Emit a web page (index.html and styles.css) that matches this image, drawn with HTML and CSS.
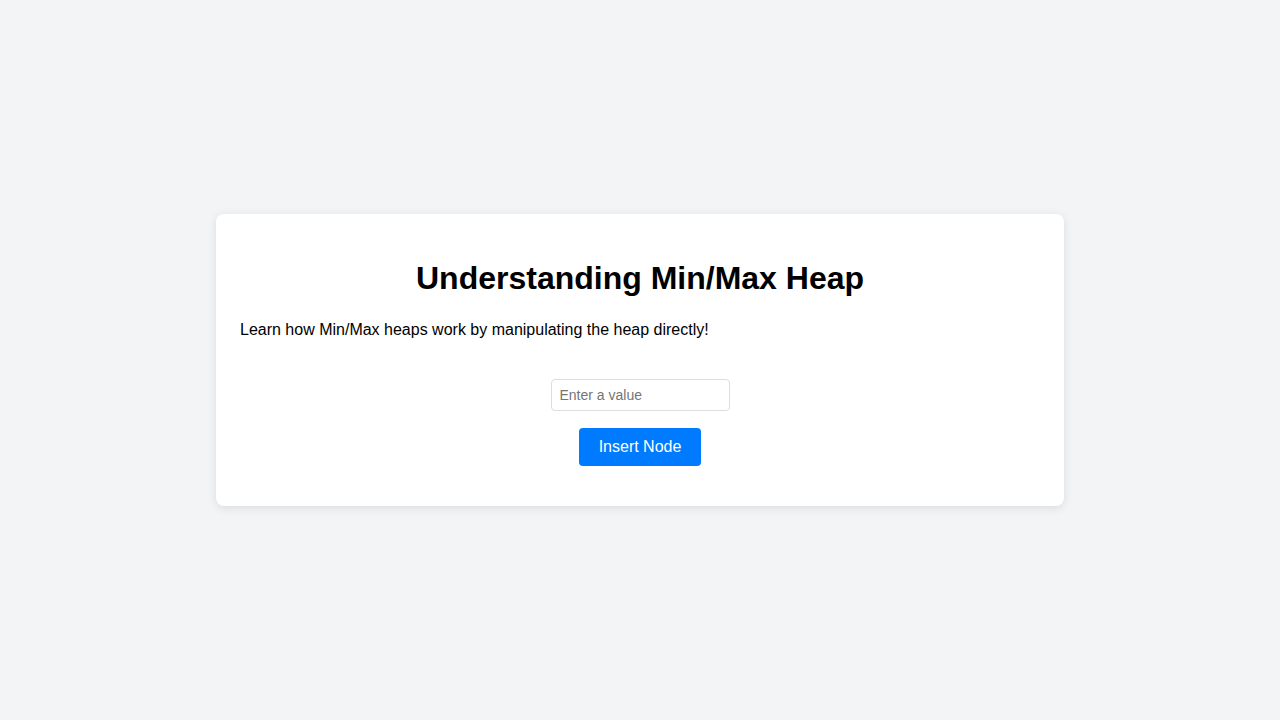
FILE: index.html
```html
<!DOCTYPE html>
<html lang="en">
<head>
<meta charset="utf-8">
<title>Min/Max Heap</title>
<link rel="stylesheet" href="styles.css">
</head>
<body>
<div class="page">
  <div class="card">
    <h1 class="title">Understanding Min/Max Heap</h1>
    <p class="intro">Learn how Min/Max heaps work by manipulating the heap directly!</p>
    <div class="controls">
      <input class="value-input" type="text" placeholder="Enter a value">
      <button class="insert-btn">Insert Node</button>
    </div>
  </div>
</div>
</body>
</html>
```
FILE: styles.css
```css
html, body {
  margin: 0;
  padding: 0;
}
body {
  background: #f3f4f6;
  font-family: "Liberation Sans", Arial, sans-serif;
  color: #000;
}
.page {
  min-height: 100vh;
  display: flex;
  align-items: center;
  justify-content: center;
}
.card {
  box-sizing: border-box;
  width: 848px;
  padding: 24px;
  background: #fff;
  border-radius: 8px;
  box-shadow: 0 2px 10px rgba(0, 0, 0, 0.1);
}
.title {
  font-size: 32px;
  font-weight: bold;
  text-align: center;
  margin: 22px 0 24px;
}
.intro {
  font-size: 16px;
  margin: 0;
}
.controls {
  display: flex;
  flex-direction: column;
  align-items: center;
  gap: 17px;
  margin-top: 40px;
  margin-bottom: 16px;
}
.value-input {
  box-sizing: border-box;
  width: 179px;
  height: 32px;
  padding: 8px;
  border: 1px solid #ddd;
  border-radius: 4px;
  font-family: "Liberation Sans", Arial, sans-serif;
  font-size: 14px;
  outline: none;
}
.value-input::placeholder {
  color: #757575;
}
.insert-btn {
  box-sizing: border-box;
  height: 38px;
  padding: 0 20px;
  border: none;
  border-radius: 4px;
  background: #007bff;
  color: #fff;
  font-family: "Liberation Sans", Arial, sans-serif;
  font-size: 16px;
  cursor: pointer;
}
```
